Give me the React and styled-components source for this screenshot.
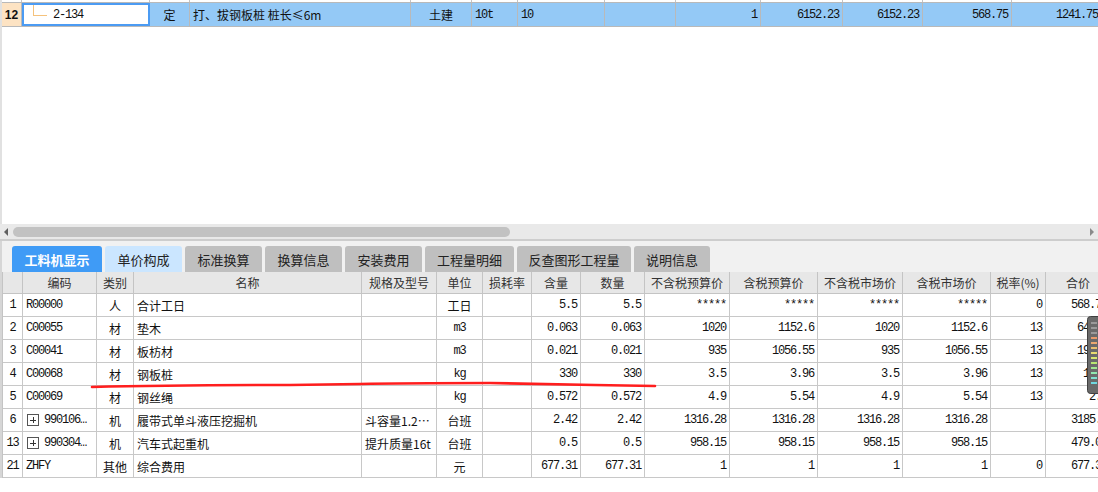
import React from 'react';
import styled, { createGlobalStyle } from 'styled-components';

const GlobalStyle = createGlobalStyle`
body {
    margin: 0;
    background: #ffffff;
    font-family: "Noto Sans CJK SC", "Liberation Sans", sans-serif;
}
`

const mono = `"Liberation Mono", "DejaVu Sans Mono", monospace`
const cjk = `"Noto Sans CJK SC", "Liberation Sans", sans-serif`

const Page = styled.div`
position: relative;
width: 1098px;
height: 492px;
overflow: hidden;
background: #ffffff;
`

const TopPane = styled.div`
height: 224px;
border-left: 2px solid #e1e1e1;
overflow: hidden;
`

const topCols = '20px 128px 40px 221px 61px 46px 87px 71px 85px 82px 80px 89px 90px'

const StubRow = styled.div`
display: grid;
grid-template-columns: ${topCols};
height: 2px;
div { border-right: 1px solid #c4c4c4; }
`

const SelRow = styled.div`
display: grid;
grid-template-columns: ${topCols};
height: 23px;
background: #94c9f6;
border-top: 1px solid #b9b9b9;
border-bottom: 1px solid #b9b9b9;
`

const SelCell = styled.div`
display: flex;
align-items: center;
justify-content: ${p => p.$align === 'right' ? 'flex-end' : p.$align === 'center' ? 'center' : 'flex-start'};
padding: 0 3px;
border-right: 1px solid #b9b9b9;
font-family: ${p => p.$mono ? mono : cjk};
font-size: 12px;
letter-spacing: ${p => p.$mono ? '-1.2px' : '0'};
color: #111;
white-space: nowrap;
overflow: hidden;
`

const NumCell = styled(SelCell)`
background: #fde3c3;
font-family: "Liberation Sans", sans-serif;
font-weight: bold;
font-size: 12px;
letter-spacing: 0;
justify-content: center;
`

const CodeCell = styled(SelCell)`
background: #ffffff;
border: 2px solid #4b9bf3;
padding: 0;
align-items: stretch;
`

const Branch = styled.span`
width: 13px;
height: 10px;
margin-left: 9px;
margin-right: 6px;
border-left: 1px solid #f5c27c;
border-bottom: 1px solid #f5c27c;
`

const CodeText = styled.span`
align-self: center;
`

const HScroll = styled.div`
height: 15px;
background: #e9e9e9;
display: flex;
align-items: center;
padding: 0 4px;
gap: 5px;
`

const Arrow = styled.span`
width: 0;
height: 0;
border-top: 4px solid transparent;
border-bottom: 4px solid transparent;
${p => p.$dir === 'left' ? 'border-right: 4px solid #606060;' : 'border-left: 4px solid #8a8a8a;'}
`

const Thumb = styled.div`
width: 497px;
height: 10px;
border-radius: 5px;
background: #c2c2c2;
`

const Spacer = styled.div`
flex: 1;
`

const Divider = styled.div`
height: 2px;
background: #cdcdcd;
`

const TabBar = styled.div`
height: 31px;
box-sizing: border-box;
padding: 5px 0 0 10px;
background: #f1f1f1;
border-left: 2px solid #d6d6d6;
display: flex;
align-items: stretch;
gap: 3px;
`

const Tab = styled.div`
width: ${p => p.$w}px;
display: flex;
align-items: center;
justify-content: center;
border-radius: 3px 3px 0 0;
font-family: ${cjk};
font-size: 13px;
font-weight: ${p => p.$active ? 'bold' : 'normal'};
color: ${p => p.$active ? '#ffffff' : '#222'};
background: ${p => p.$active ? '#3f9bf6' : p.$light ? '#cbe6ff' : '#bfbfbf'};
`

const TablePane = styled.div`
border-left: 2px solid #d6d6d6;
`

const tableCols = '20px 74px 37px 228px 75px 46px 49px 49px 64px 85px 88px 85px 88px 55px 65px'

const Grid = styled.div`
display: grid;
grid-template-columns: ${tableCols};
border-left: 1px solid #c4c4c4;
`

const Head = styled.div`
height: 21px;
display: flex;
align-items: center;
justify-content: center;
background: #e7e7e7;
border-right: 1px solid #c4c4c4;
border-bottom: 1px solid #c4c4c4;
font-family: ${cjk};
font-size: 12px;
color: #333;
white-space: nowrap;
`

const Cell = styled.div`
height: 22px;
display: flex;
align-items: center;
justify-content: ${p => p.$align === 'right' ? 'flex-end' : p.$align === 'center' ? 'center' : 'flex-start'};
padding: 0 3px;
border-right: 1px solid #c8c8c8;
border-bottom: 1px solid #c8c8c8;
font-family: ${p => p.$mono ? mono : cjk};
font-size: 12px;
letter-spacing: ${p => p.$mono ? '-1.2px' : '0'};
color: #111;
white-space: nowrap;
overflow: hidden;
`

const Plus = styled.span`
width: 10px;
height: 10px;
margin: 0 5px 0 1px;
border: 1px solid #555;
position: relative;
flex: none;
&::before, &::after {
    content: '';
    position: absolute;
    background: #333;
}
&::before { left: 2px; right: 2px; top: 4.5px; height: 1px; }
&::after { top: 2px; bottom: 2px; left: 4.5px; width: 1px; }
`

const Overlay = styled.svg`
position: absolute;
left: 0;
top: 0;
pointer-events: none;
`

const heads = ['', '编码', '类别', '名称', '规格及型号', '单位', '损耗率', '含量', '数量', '不含税预算价', '含税预算价', '不含税市场价', '含税市场价', '税率(%)', '合价']

const rows = [
    { n: '1', code: 'R00000', type: '人', name: '合计工日', spec: '', unit: '工日', q: '5.5', a: '5.5', p: ['*****', '*****', '*****', '*****'], tax: '0', total: '568.75' },
    { n: '2', code: 'C00055', type: '材', name: '垫木', spec: '', unit: 'm3', q: '0.063', a: '0.063', p: ['1020', '1152.6', '1020', '1152.6'], tax: '13', total: '64.26' },
    { n: '3', code: 'C00041', type: '材', name: '板枋材', spec: '', unit: 'm3', q: '0.021', a: '0.021', p: ['935', '1056.55', '935', '1056.55'], tax: '13', total: '19.64' },
    { n: '4', code: 'C00068', type: '材', name: '钢板桩', spec: '', unit: 'kg', q: '330', a: '330', p: ['3.5', '3.96', '3.5', '3.96'], tax: '13', total: '1155' },
    { n: '5', code: 'C00069', type: '材', name: '钢丝绳', spec: '', unit: 'kg', q: '0.572', a: '0.572', p: ['4.9', '5.54', '4.9', '5.54'], tax: '13', total: '2.8' },
    { n: '6', code: '990106…', plus: true, type: '机', name: '履带式单斗液压挖掘机', spec: '斗容量1.2…', unit: '台班', q: '2.42', a: '2.42', p: ['1316.28', '1316.28', '1316.28', '1316.28'], tax: '', total: '3185.4' },
    { n: '13', code: '990304…', plus: true, type: '机', name: '汽车式起重机', spec: '提升质量16t', unit: '台班', q: '0.5', a: '0.5', p: ['958.15', '958.15', '958.15', '958.15'], tax: '', total: '479.08' },
    { n: '21', code: 'ZHFY', type: '其他', name: '综合费用', spec: '', unit: '元', q: '677.31', a: '677.31', p: ['1', '1', '1', '1'], tax: '0', total: '677.31' },
]

const tabs = [
    { label: '工料机显示', w: 90, active: true },
    { label: '单价构成', w: 77, light: true },
    { label: '标准换算', w: 77 },
    { label: '换算信息', w: 77 },
    { label: '安装费用', w: 77 },
    { label: '工程量明细', w: 89 },
    { label: '反查图形工程量', w: 114 },
    { label: '说明信息', w: 76 },
]

const isAscii = s => /^[A-Za-z0-9.]+$/.test(s)

function Annotations() {
    const colors = ['#9a9a9a', '#9a9a9a', '#9a9a9a', '#e89a6a', '#eaa870', '#e8c070', '#e8dc70', '#d8e870', '#b8e870', '#a0e890', '#90e8b0', '#80e0d0', '#70d8e0']
    return (
        <Overlay width="1098" height="492">
            <rect x="1087.5" y="316.5" width="14" height="77" rx="3" fill="#6a6a6a" stroke="#3f3f3f" />
            {colors.map((c, i) => (
                <rect key={i} x="1091" y={322 + i * 5} width="6" height="2" fill={c} />
            ))}
            <path d="M92 387 C 130 386, 220 385, 290 385 L 360 384 C 400 383, 450 383, 490 383 C 520 384, 600 385, 655 386"
                stroke="#ff1e1e" strokeWidth="2.6" fill="none" strokeLinecap="round" />
        </Overlay>
    )
}

export default function App() {
    return (
        <Page>
            <GlobalStyle />
            <TopPane>
                <StubRow>{Array.from({ length: 13 }).map((_, i) => <div key={i} />)}</StubRow>
                <SelRow>
                    <NumCell>12</NumCell>
                    <CodeCell $mono>
                        <Branch />
                        <CodeText>2-134</CodeText>
                    </CodeCell>
                    <SelCell $align="center">定</SelCell>
                    <SelCell>打、拔钢板桩 桩长≤6m</SelCell>
                    <SelCell $align="center">土建</SelCell>
                    <SelCell $mono>10t</SelCell>
                    <SelCell $mono>10</SelCell>
                    <SelCell />
                    <SelCell $mono $align="right">1</SelCell>
                    <SelCell $mono $align="right">6152.23</SelCell>
                    <SelCell $mono $align="right">6152.23</SelCell>
                    <SelCell $mono $align="right">568.75</SelCell>
                    <SelCell $mono $align="right">1241.75</SelCell>
                </SelRow>
            </TopPane>

            <HScroll>
                <Arrow $dir="left" />
                <Thumb />
                <Spacer />
                <Arrow $dir="right" />
            </HScroll>
            <Divider />

            <TabBar>
                {tabs.map(t => (
                    <Tab key={t.label} $w={t.w} $active={t.active} $light={t.light}>{t.label}</Tab>
                ))}
            </TabBar>

            <TablePane>
                <Grid>
                    {heads.map((h, i) => <Head key={i}>{h}</Head>)}
                    {rows.map(r => (
                        <React.Fragment key={r.n}>
                            <Cell $align="center" $mono>{r.n}</Cell>
                            <Cell $mono>
                                {r.plus ? <Plus /> : null}
                                {r.code}
                            </Cell>
                            <Cell $align="center">{r.type}</Cell>
                            <Cell>{r.name}</Cell>
                            <Cell>{r.spec}</Cell>
                            <Cell $align="center" $mono={isAscii(r.unit)}>{r.unit}</Cell>
                            <Cell />
                            <Cell $mono $align="right">{r.q}</Cell>
                            <Cell $mono $align="right">{r.a}</Cell>
                            {r.p.map((v, i) => <Cell key={i} $mono $align="right">{v}</Cell>)}
                            <Cell $mono $align="right">{r.tax}</Cell>
                            <Cell $mono $align="right">{r.total}</Cell>
                        </React.Fragment>
                    ))}
                </Grid>
            </TablePane>
            <Annotations />
        </Page>
    )
}
